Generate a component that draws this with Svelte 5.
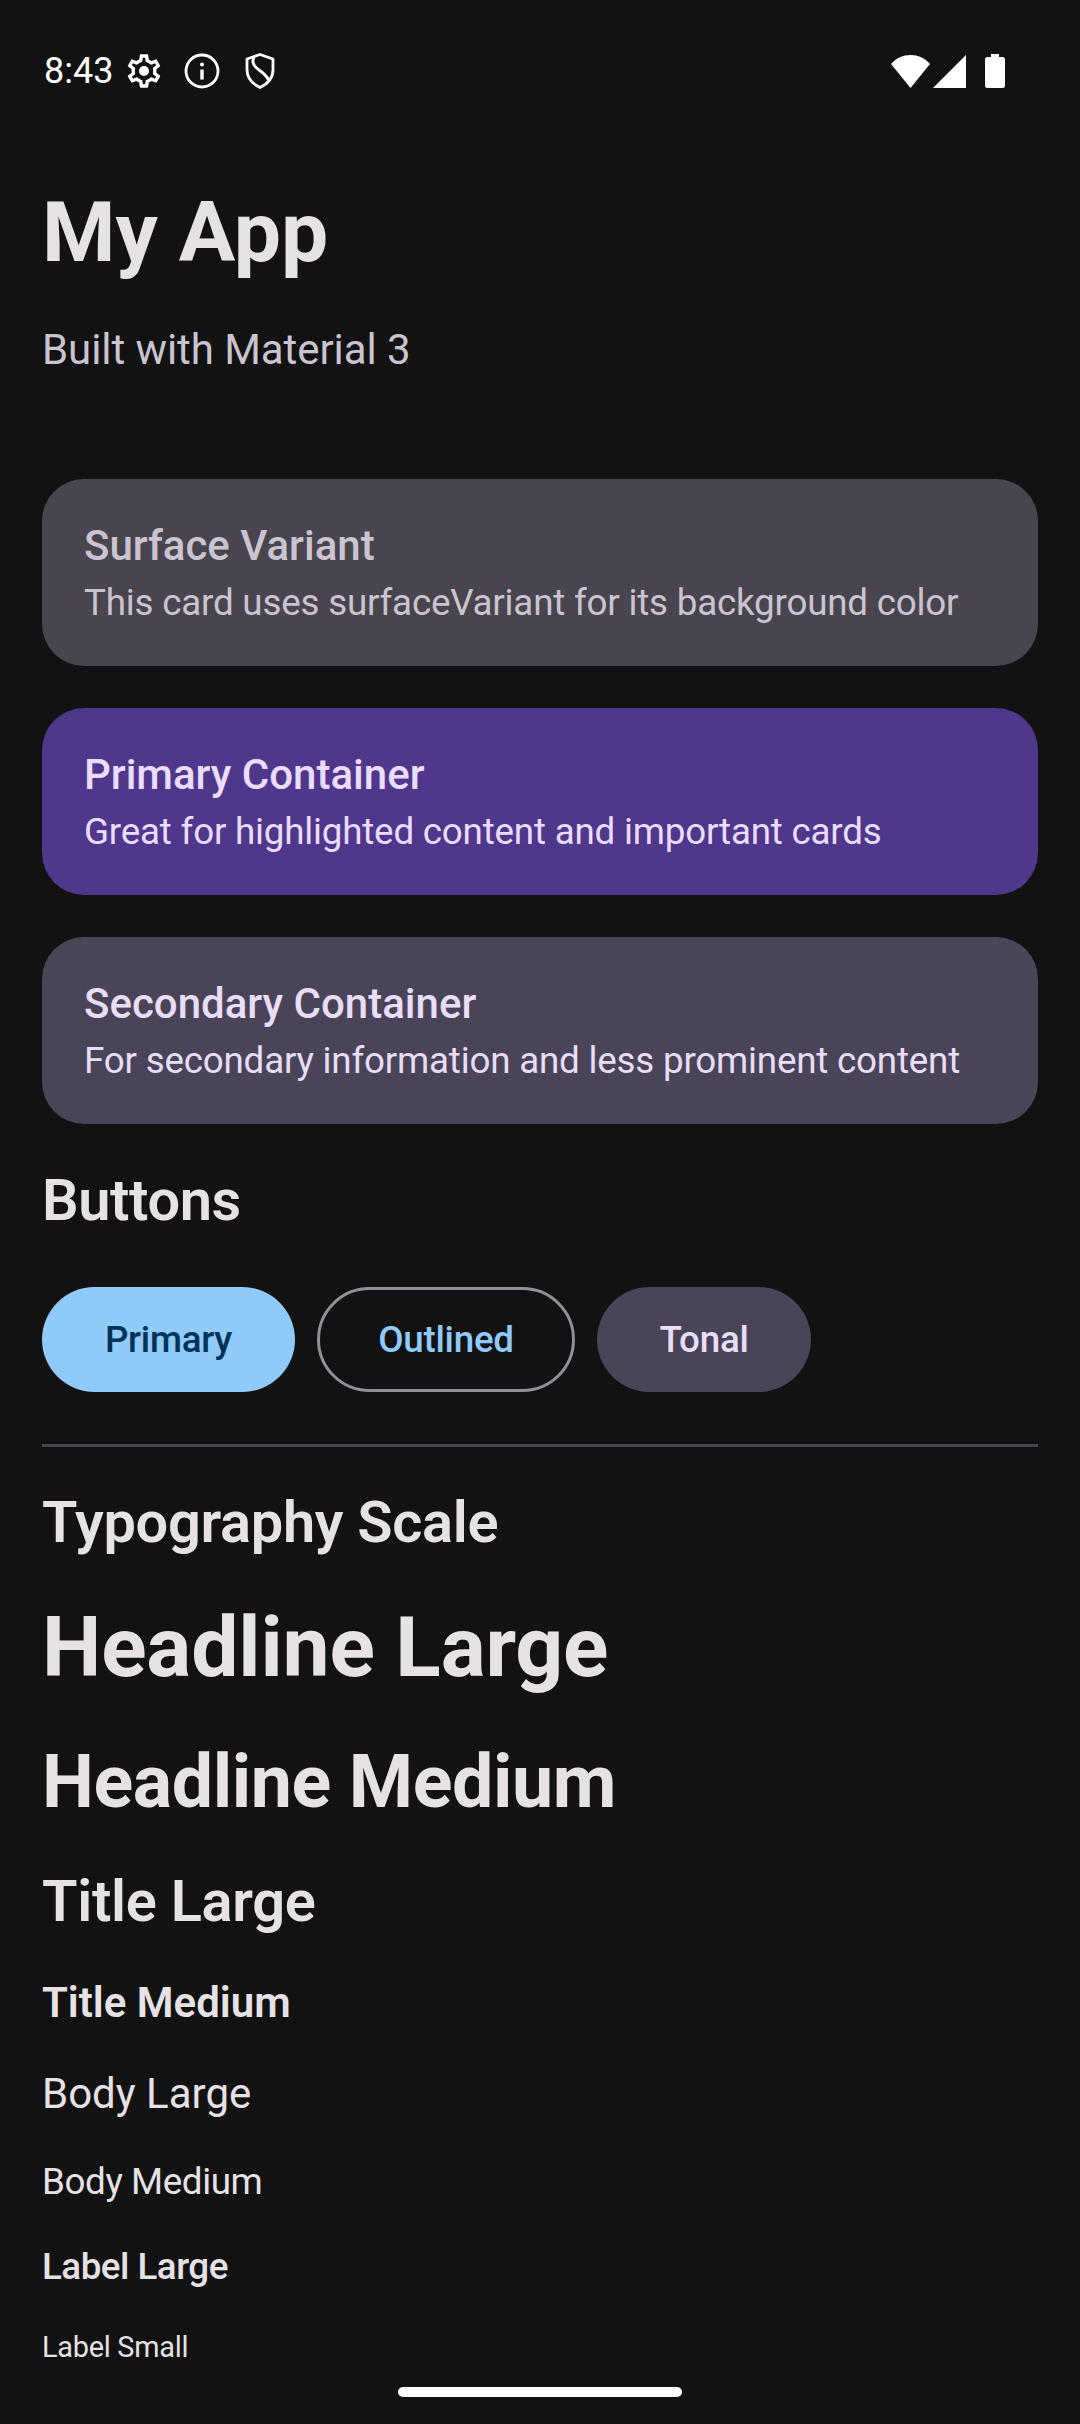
<script>
  const cards = [
    { cls: "variant", title: "Surface Variant", body: "This card uses surfaceVariant for its background color" },
    { cls: "primary", title: "Primary Container", body: "Great for highlighted content and important cards" },
    { cls: "secondary", title: "Secondary Container", body: "For secondary information and less prominent content" },
  ];
</script>

<div class="screen">
  <header class="status">
    <div class="left">
      <span class="time">8:43</span>
      <svg class="gear" viewBox="0 0 24 24" fill="#fff">
        <path d="M19.43 12.98c.04-.32.07-.64.07-.98 0-.34-.03-.66-.07-.98l2.11-1.65c.19-.15.24-.42.12-.64l-2-3.46c-.09-.16-.26-.25-.44-.25-.06 0-.12.01-.17.03l-2.49 1c-.52-.4-1.08-.73-1.69-.98l-.38-2.65C14.46 2.18 14.25 2 14 2h-4c-.25 0-.46.18-.49.42l-.38 2.65c-.61.25-1.17.59-1.69.98l-2.49-1c-.06-.02-.12-.03-.18-.03-.17 0-.34.09-.43.25l-2 3.46c-.13.22-.07.49.12.64l2.11 1.65c-.04.32-.07.65-.07.98 0 .33.03.66.07.98l-2.11 1.65c-.19.15-.24.42-.12.64l2 3.46c.09.16.26.25.44.25.06 0 .12-.01.17-.03l2.49-1c.52.4 1.08.73 1.69.98l.38 2.65c.03.24.24.42.49.42h4c.25 0 .46-.18.49-.42l.38-2.65c.61-.25 1.17-.59 1.69-.98l2.49 1c.06.02.12.03.18.03.17 0 .34-.09.43-.25l2-3.46c.12-.22.07-.49-.12-.64l-2.11-1.65zm-1.98-1.71c.04.31.05.52.05.73 0 .21-.02.43-.05.73l-.14 1.13.89.7 1.08.84-.7 1.21-1.27-.51-1.04-.42-.9.68c-.43.32-.84.56-1.25.73l-1.06.43-.16 1.13-.2 1.35h-1.4l-.19-1.35-.16-1.13-1.06-.43c-.43-.18-.83-.41-1.23-.71l-.91-.7-1.06.43-1.27.51-.7-1.21 1.08-.84.89-.7-.14-1.13c-.03-.31-.05-.54-.05-.74s.02-.43.05-.73l.14-1.13-.89-.7-1.08-.84.7-1.21 1.27.51 1.04.42.9-.68c.43-.32.84-.56 1.25-.73l1.06-.43.16-1.13.2-1.35h1.39l.19 1.35.16 1.13 1.06.43c.43.18.83.41 1.23.71l.91.7 1.06-.43 1.27-.51.7 1.21-1.07.85-.89.7.14 1.13z"/>
        <circle cx="12" cy="12" r="3"/>
      </svg>
      <svg class="info" viewBox="0 0 36 36" fill="none" stroke="#fff" stroke-width="2.800">
        <circle cx="18" cy="18" r="16"/>
        <path d="M18 16.500v10" stroke-width="3.400"/>
        <circle cx="18" cy="11.500" r="2" fill="#fff" stroke="none"/>
      </svg>
      <svg class="shield" viewBox="0 0 30 36" fill="none" stroke="#fff" stroke-width="2.800" stroke-linejoin="round">
        <path d="M15 1.500 28 6v10.500c0 8.500-5.500 14.500-13 18-7.500-3.500-13-9.500-13-18V6z"/>
        <path d="M9 4.500C6.500 9 9 13.500 14 17c5 3.500 8 6 9.500 10"/>
      </svg>
    </div>
    <div class="right">
      <svg class="wifi" viewBox="0 0 39 33"><path d="M0 9C10-3 29-3 39 9L19.500 33z" fill="#fff"/></svg>
      <svg class="signal" viewBox="0 0 33 33"><path d="M33 0v33H0z" fill="#fff"/></svg>
      <svg class="battery" viewBox="0 0 20 34"><path d="M6 0h8v3h3.500A2.500 2.500 0 0 1 20 5.500V31.500A2.500 2.500 0 0 1 17.500 34H2.500A2.500 2.500 0 0 1 0 31.500V5.500A2.500 2.500 0 0 1 2.500 3H6z" fill="#fff"/></svg>
    </div>
  </header>

  <main class="content">
    <h1>My App</h1>
    <p class="sub">Built with Material 3</p>

    <div class="cards">
      {#each cards as card}
        <section class="card {card.cls}">
          <h3>{card.title}</h3>
          <p>{card.body}</p>
        </section>
      {/each}
    </div>

    <h2 class="buttons-title">Buttons</h2>
    <div class="buttons">
      <button class="btn filled">Primary</button>
      <button class="btn outlined">Outlined</button>
      <button class="btn tonal">Tonal</button>
    </div>
    <hr />

    <h2 class="type-title">Typography Scale</h2>
    <div class="hl">Headline Large</div>
    <div class="hm">Headline Medium</div>
    <div class="tl">Title Large</div>
    <div class="tm">Title Medium</div>
    <div class="bl">Body Large</div>
    <div class="bm">Body Medium</div>
    <div class="ll">Label Large</div>
    <div class="ls">Label Small</div>
  </main>

  <div class="nav-handle"></div>
</div>

<style>
  :global(body) {
    margin: 0;
    background: #121212;
  }
  .screen {
    width: 1080px;
    height: 2424px;
    background: #121212;
    color: #e6e1e5;
    font-family: Roboto, sans-serif;
    overflow: hidden;
    position: relative;
  }
  .status {
    height: 142px;
    padding: 0 75px 0 44px;
    display: flex;
    justify-content: space-between;
    align-items: center;
    box-sizing: border-box;
  }
  .left, .right {
    display: flex;
    align-items: center;
  }
  .time {
    color: #fff;
    font-size: 36px;
    width: 69px;
  }
  .gear {
    width: 40px;
    height: 40px;
    margin-left: 11px;
  }
  .info {
    width: 36px;
    height: 36px;
    margin-left: 20px;
  }
  .shield {
    width: 30px;
    height: 36px;
    margin-left: 25px;
  }
  .wifi {
    width: 39px;
    height: 33px;
  }
  .signal {
    width: 33px;
    height: 33px;
    margin-left: 3px;
  }
  .battery {
    width: 20px;
    height: 34px;
    margin-left: 19px;
  }
  .content {
    padding: 0 42px;
  }
  h1 {
    margin: 0;
    font-size: 84px;
    line-height: 96px;
    font-weight: 700;
    padding-top: 43px;
  }
  .sub {
    margin: 40px 0 0;
    font-size: 42px;
    line-height: 58px;
    color: #cac4d0;
    letter-spacing: -0.07px;
  }
  .cards {
    margin-top: 100px;
    display: flex;
    flex-direction: column;
    gap: 42px;
  }
  .card {
    height: 187px;
    box-sizing: border-box;
    border-radius: 42px;
    padding: 42.500px 42px 0;
  }
  .card h3 {
    margin: 0;
    font-size: 42px;
    line-height: 48px;
    font-weight: 500;
  }
  .card p {
    margin: 8px 0 0;
    font-size: 36.750px;
    line-height: 50px;
    letter-spacing: -0.2px;
  }
  .variant {
    background: #49454f;
    color: #cac4d0;
  }
  .primary {
    background: #4f378b;
    color: #eaddff;
  }
  .secondary {
    background: #4a4458;
    color: #e8def8;
  }
  h2 {
    margin: 0;
    font-size: 57.750px;
    font-weight: 600;
    line-height: 68px;
    letter-spacing: -0.3px;
  }
  .buttons-title {
    margin-top: 42px;
    letter-spacing: -0.4px;
  }
  .buttons {
    display: flex;
    gap: 22px;
    margin-top: 53px;
  }
  .btn {
    height: 105px;
    border-radius: 53px;
    border: none;
    font-family: inherit;
    font-size: 36.750px;
    font-weight: 500;
    letter-spacing: -0.25px;
    padding: 0;
    box-sizing: border-box;
  }
  .filled {
    width: 253px;
    background: #90caf9;
    color: #003258;
  }
  .outlined {
    width: 258px;
    background: none;
    border: 3px solid #938f99;
    color: #90caf9;
  }
  .tonal {
    width: 214px;
    background: #4a4458;
    color: #e8def8;
  }
  hr {
    margin: 52px 0 0;
    border: none;
    height: 3px;
    background: #49454f;
  }
  .type-title {
    margin-top: 41px;
  }
  .hl { font-size: 84px; font-weight: 700; line-height: 100px; margin-top: 42px; letter-spacing: -0.15px; }
  .hm { font-size: 73.500px; font-weight: 700; line-height: 86px; margin-top: 41px; letter-spacing: -0.4px; }
  .tl { font-size: 57.750px; font-weight: 600; line-height: 68px; margin-top: 42px; letter-spacing: -0.28px; }
  .tm { font-size: 42px; font-weight: 600; line-height: 50px; margin-top: 42.600px; }
  .bl { font-size: 42px; line-height: 50px; margin-top: 41px; }
  .bm { font-size: 36.750px; line-height: 44px; margin-top: 41px; letter-spacing: -0.4px; }
  .ll { font-size: 36.750px; font-weight: 500; line-height: 44px; margin-top: 41px; letter-spacing: -0.5px; }
  .ls { font-size: 28.875px; line-height: 36px; margin-top: 40.700px; letter-spacing: -0.27px; }
  .nav-handle {
    position: absolute;
    left: 398px;
    bottom: 27px;
    width: 284px;
    height: 10px;
    border-radius: 5px;
    background: #fff;
  }
</style>
